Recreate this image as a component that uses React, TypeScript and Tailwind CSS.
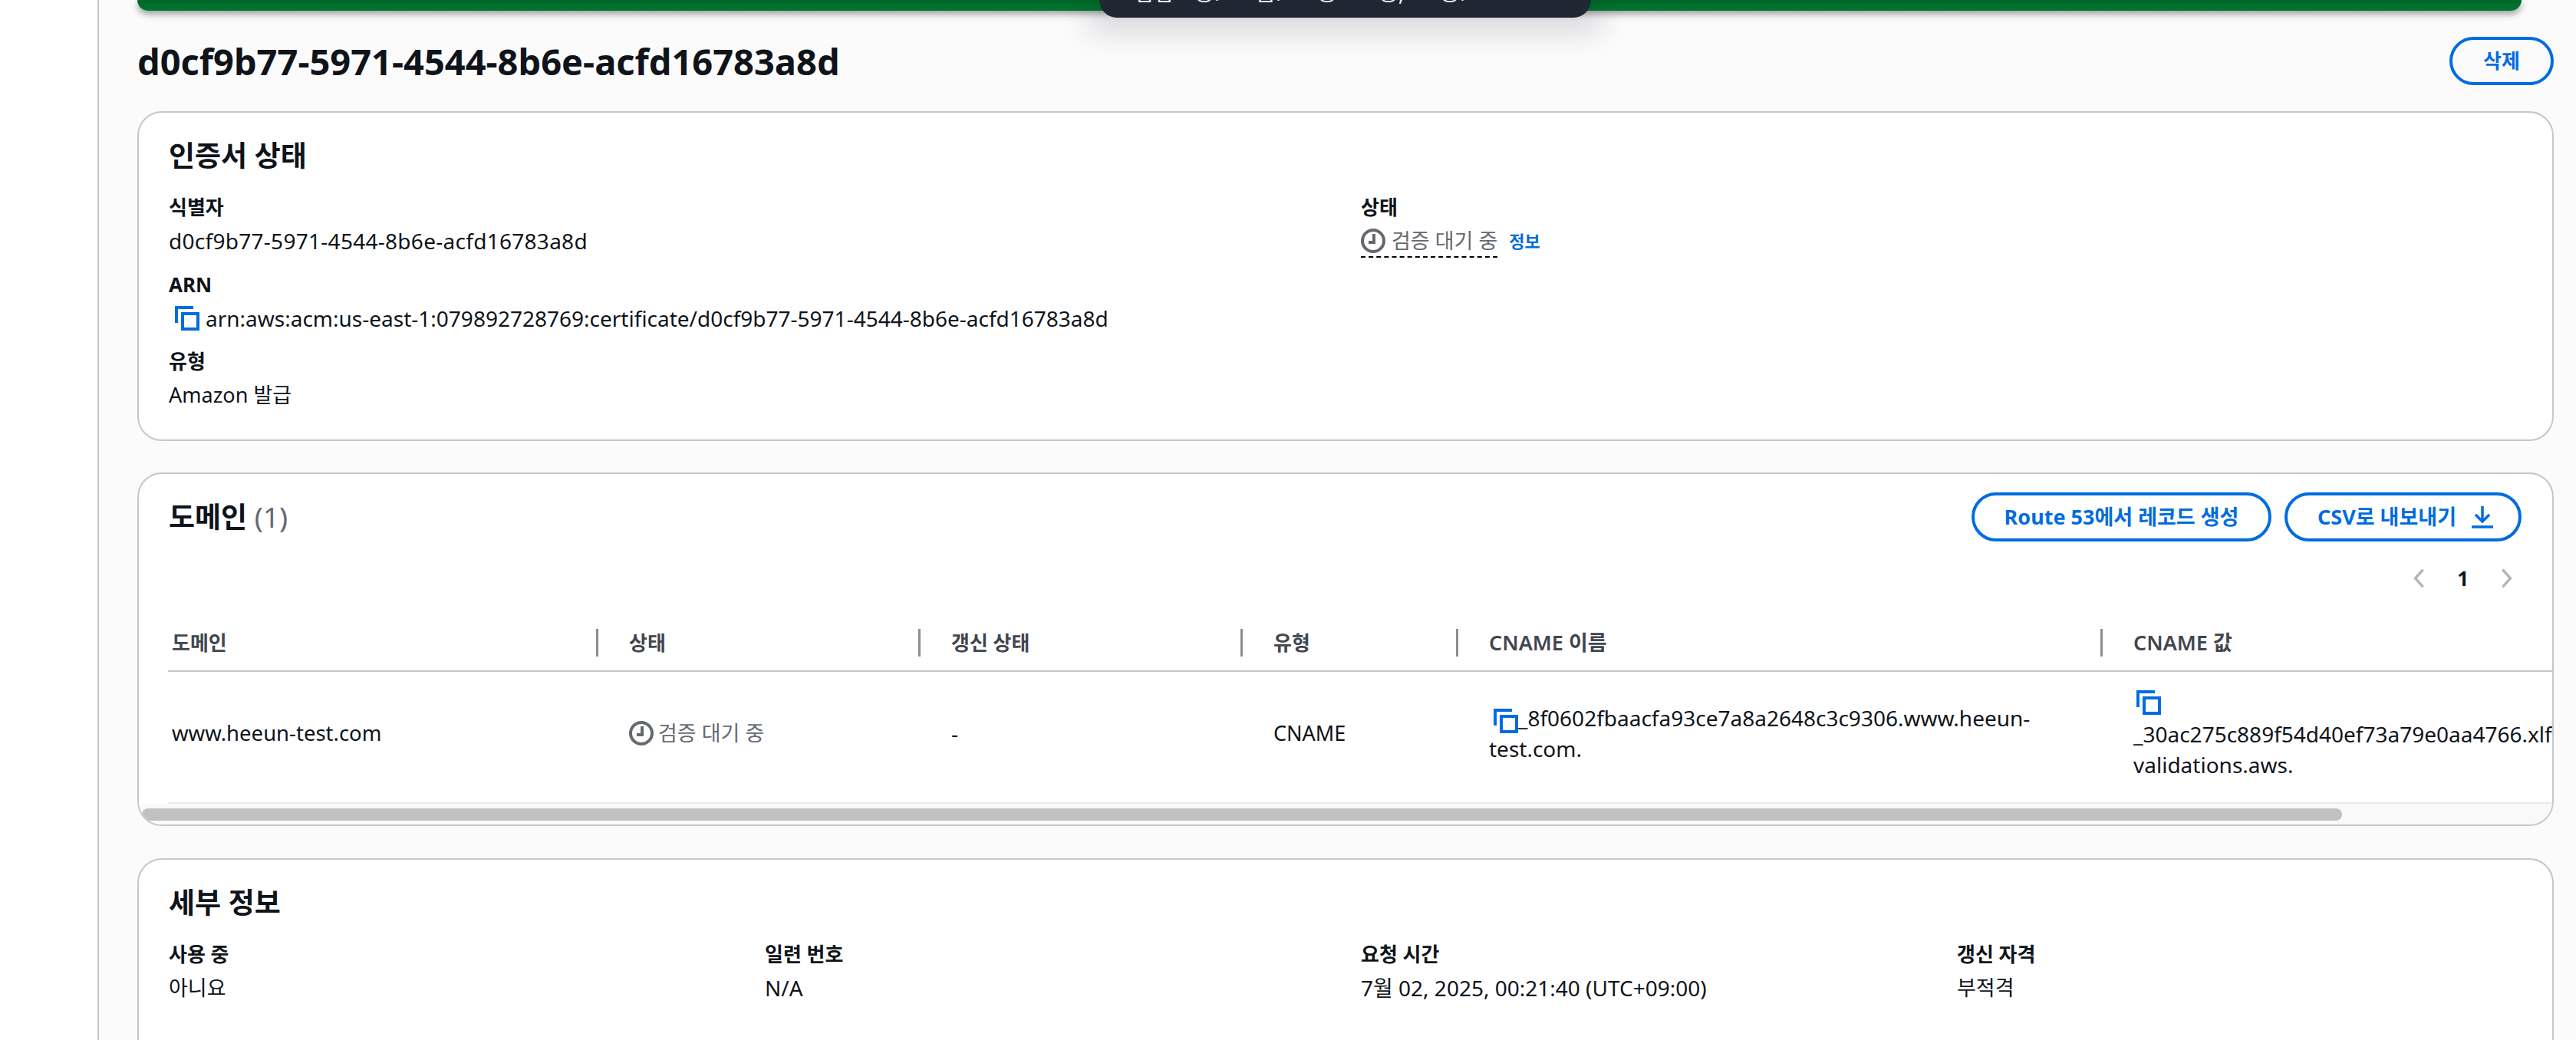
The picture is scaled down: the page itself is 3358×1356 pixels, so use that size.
import React from "react";

const Copy = () => (
  <svg viewBox="0 0 16 16" fill="none" stroke="#006ce0" strokeWidth="2" className="inline-block h-[32px] w-[32px] shrink-0 align-middle">
    <path d="M1 11V1h11" />
    <rect x="5" y="5" width="10" height="10" />
  </svg>
);

const Clock = ({ size }: { size: string }) => (
  <svg viewBox="0 0 16 16" fill="none" stroke="#656871" strokeWidth="2" className={size}>
    <circle cx="8" cy="8" r="7" />
    <path d="M8.5 3.5V9H5" />
  </svg>
);

const Chevron = ({ flip }: { flip?: boolean }) => (
  <svg viewBox="0 0 16 24" fill="none" stroke="#b4b4bb" strokeWidth="3" className={flip ? "h-[28px] w-[18px] rotate-180" : "h-[28px] w-[18px]"}>
    <path d="M13 2 4 12l9 10" />
  </svg>
);

const Field = ({ label, children }: { label: string; children: React.ReactNode }) => (
  <div>
    <div className="h-[40px] text-[26px] font-bold leading-[40px] text-[#0f141a]">{label}</div>
    <div className="mt-[4px] min-h-[40px] text-[27px] leading-[40px] text-[#0f141a]">{children}</div>
  </div>
);

const Th = ({ text, first, latin }: { text: string; first?: boolean; latin?: boolean }) => (
  <div className="flex h-[56px] items-start border-b-[2px] border-[#c6c6cd]">
    {!first && <span className="mr-[40px] h-[36px] w-[3px] bg-[#8c8c94]" />}
    <span className={(first ? "pl-[5px] " : "") + (latin ? "text-[27px] font-semibold leading-[36px] text-[#424650]" : "text-[26px] font-semibold leading-[36px] text-[#424650]")}>{text}</span>
  </div>
);

const Td = ({ children, first }: { children: React.ReactNode; first?: boolean }) => (
  <div className={first ? "flex h-[172px] items-center border-b-[2px] border-[#e9e9ed] pb-[10px] pl-[5px] text-[27.5px] text-[#0f141a]" : "flex h-[172px] items-center border-b-[2px] border-[#e9e9ed] pb-[10px] pl-[43px] text-[28px] text-[#0f141a]"}>
    {children}
  </div>
);

export default function App() {
  return (
    <div className="relative flex h-[1356px] overflow-hidden bg-white font-['Noto_Sans','Noto_Sans_CJK_KR',sans-serif]">
      <aside className="w-[129px] shrink-0 border-r-2 border-[#c6c6cd] bg-white" />
      <main className="min-w-0 flex-1 bg-[#fbfbfc] pl-[50px] pr-[29px]">
        <div className="mr-[42px] h-[14px] rounded-b-[24px] bg-gradient-to-b from-[#00662a] to-[#00772e] shadow-[0_4px_10px_rgba(0,0,0,0.4)]" />

        <div className="mt-[34px] flex h-[63px] items-center justify-between">
          <h1 className="text-[47px] font-bold leading-[60px] text-[#0f141a]">d0cf9b77-5971-4544-8b6e-acfd16783a8d</h1>
          <button className="flex h-[63px] w-[136px] items-center justify-center rounded-full border-[4px] border-[#006ce0] text-[26px] font-bold text-[#006ce0]">삭제</button>
        </div>

        <section className="mt-[34px] h-[430px] rounded-[32px] border-2 border-[#c6c6cd] bg-white pl-[39px] pr-[38px] pt-[34px]">
          <h2 className="text-[37px] font-bold leading-[44px] text-[#0f141a]">인증서 상태</h2>
          <div className="mt-[25px] grid grid-cols-[1554px_1fr]">
            <div className="flex flex-col gap-[16px]">
              <Field label="식별자">
                <span className="text-[28px] tracking-[0.28px]">d0cf9b77-5971-4544-8b6e-acfd16783a8d</span>
              </Field>
              <Field label="ARN">
                <span className="flex items-center text-[28px]">
                  <span className="ml-[8px] mr-[8px] flex"><Copy /></span>
                  arn:aws:acm:us-east-1:079892728769:certificate/d0cf9b77-5971-4544-8b6e-acfd16783a8d
                </span>
              </Field>
              <Field label="유형">Amazon 발급</Field>
            </div>
            <Field label="상태">
              <span className="flex items-start">
                <span className="flex h-[42px] items-center gap-[8px] border-b-2 border-dashed border-black text-[#656871]">
                  <Clock size="h-[32px] w-[32px]" />
                  검증 대기 중
                </span>
                <span className="ml-[15px] text-[22px] font-bold leading-[40px] text-[#006ce0]">정보</span>
              </span>
            </Field>
          </div>
        </section>

        <section className="mt-[41px] h-[461px] overflow-hidden rounded-[32px] border-2 border-[#c6c6cd] bg-white pt-[24px]">
          <div className="flex justify-between pl-[39px] pr-[40px]">
            <h2 className="text-[37px] font-bold leading-[64px] text-[#0f141a]">
              도메인 <span className="font-normal text-[#656871]">(1)</span>
            </h2>
            <div className="flex gap-[17px]">
              <button className="flex h-[64px] w-[391px] items-center justify-center rounded-full border-[4px] border-[#006ce0] text-[27px] font-bold text-[#006ce0]">Route 53에서 레코드 생성</button>
              <button className="flex h-[64px] w-[309px] items-center justify-center gap-[20px] rounded-full border-[4px] border-[#006ce0] pl-[6px] text-[27px] font-bold text-[#006ce0]">
                CSV로 내보내기
                <svg viewBox="0 0 28 30" fill="none" stroke="#006ce0" strokeWidth="3.5" className="h-[30px] w-[28px]">
                  <path d="M14 1v19M5 12l9 9 9-9M0 28h28" />
                </svg>
              </button>
            </div>
          </div>
          <div className="mt-[34px] flex h-[28px] items-center justify-end pr-[50px]">
            <Chevron />
            <span className="mx-[41px] text-[26px] font-bold text-[#0f141a]">1</span>
            <Chevron flip />
          </div>
          <div className="ml-[38px] mt-[52px] grid w-[3400px] grid-cols-[558px_420px_420px_281px_840px_881px]">
            <Th first text="도메인" />
            <Th text="상태" />
            <Th text="갱신 상태" />
            <Th text="유형" />
            <Th latin text="CNAME 이름" />
            <Th latin text="CNAME 값" />
            <Td first>www.heeun-test.com</Td>
            <Td>
              <span className="flex items-center gap-[6px] text-[27px] text-[#656871]">
                <Clock size="h-[32px] w-[32px]" />
                검증 대기 중
              </span>
            </Td>
            <Td>-</Td>
            <Td><span className="text-[27px]">CNAME</span></Td>
            <Td>
              <span className="w-[720px] leading-[40px]">
                <span className="ml-[6px]"><Copy /></span>
                _8f0602fbaacfa93ce7a8a2648c3c9306.www.heeun-test.com.
              </span>
            </Td>
            <Td>
              <span className="block w-[880px] pt-[5px] leading-[40px]">
                <span className="mb-[5px] ml-[4px] flex h-[32px]"><Copy /></span>
                _30ac275c889f54d40ef73a79e0aa4766.xlfgrnxltb.acm-<br />validations.aws.
              </span>
            </Td>
          </div>
          <div className="h-[27px] bg-[#f9f9f9] pl-[4px] pt-[6px]">
            <div className="h-[16px] w-[2868px] rounded-[8px] bg-[#c1c1c1]" />
          </div>
        </section>

        <section className="mt-[42px] rounded-[32px] border-2 border-[#c6c6cd] bg-white pl-[39px] pr-[38px] pt-[34px]">
          <h2 className="text-[37px] font-bold leading-[44px] text-[#0f141a]">세부 정보</h2>
          <div className="mt-[25px] grid grid-cols-[777px_777px_777px_1fr] gap-y-[42px]">
            <Field label="사용 중">아니요</Field>
            <Field label="일련 번호"><span className="text-[28px]">N/A</span></Field>
            <Field label="요청 시간"><span className="text-[28px]">7월 02, 2025, 00:21:40 (UTC+09:00)</span></Field>
            <Field label="갱신 자격">부적격</Field>
            <Field label="도메인 이름">www.heeun-test.com</Field>
            <Field label="퍼블릭 키 정보">RSA 2048</Field>
            <Field label="발급 시간">-</Field>
            <Field label="서명 알고리즘">SHA-256</Field>
          </div>
        </section>
      </main>

      <div className="absolute left-[1433px] top-0 h-[23px] w-[641px] overflow-hidden rounded-b-[26px] bg-[#232b37] text-[28px] leading-[40px] text-white">
        <div className="absolute left-[46px] top-[-30px] flex whitespace-nowrap">
          <span className="w-[78px]">답답</span>
          {["용.", "몸.", "용-", "용,", "용."].map((t, i) => (
            <span key={i} className="w-[80px]">{t}</span>
          ))}
        </div>
      </div>
      <div className="absolute left-[1433px] top-[23px] h-0 w-[641px] shadow-[0_0_40px_14px_rgba(0,7,22,0.2)]" />
    </div>
  );
}
